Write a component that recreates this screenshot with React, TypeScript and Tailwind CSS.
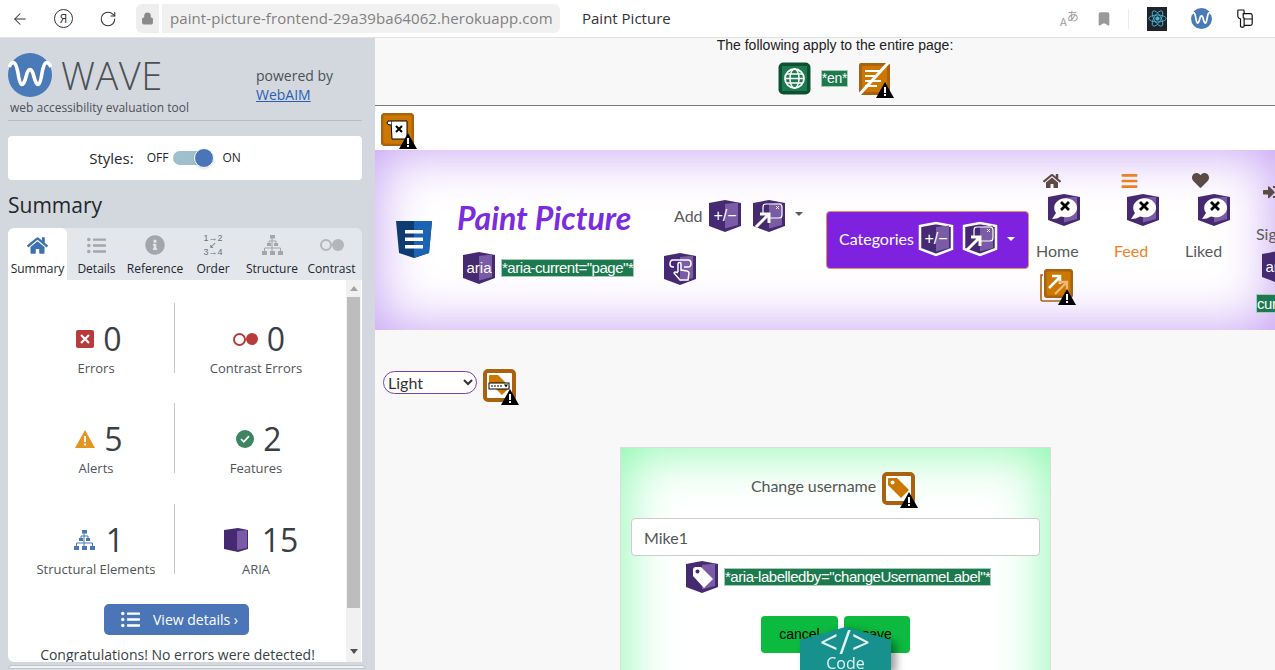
import { ArrowLeft, RotateCw, Lock, Bookmark } from "lucide-react";
import { FaHome, FaListUl, FaInfoCircle, FaHeart, FaBars, FaSignInAlt } from "react-icons/fa";
import type { ReactNode } from "react";

// purple WAVE ARIA badge
function AriaBadge({ children, outlined = false }: { children?: ReactNode; outlined?: boolean }) {
  return (
    <svg viewBox="-3 -3 38 38" className={outlined ? "w-[38px] h-[38px] shrink-0" : "w-[38px] h-[38px] -m-[3px] shrink-0"}>
      <path d="M0 3 L16 0 L32 3 V26 L16 32 L0 26 Z" fill="#452a72" stroke={outlined ? "#fff" : "none"} strokeWidth={outlined ? 2.5 : 0} />
      <path d="M16 4 L29 2.5 V25 L16 28.5 Z" fill="#7a5ba5" />
      {children}
    </svg>
  );
}

function AlertMark() {
  return (
    <svg viewBox="0 0 18 16" className="absolute -right-[3px] -bottom-[3px] w-[18px] h-[16px]">
      <path d="M9 0 L18 16 H0 Z" fill="#000" />
      <rect x="8" y="5" width="2" height="6" fill="#fff" />
      <rect x="8" y="12" width="2" height="2" fill="#fff" />
    </svg>
  );
}

// orange alert icon with the black warning corner
function OrangeIcon({ children, className = "" }: { children: ReactNode; className?: string }) {
  return (
    <span className={`relative inline-block w-[33px] h-[33px] shrink-0 ${className}`}>
      <svg viewBox="0 0 33 33" className="w-[33px] h-[33px]">{children}</svg>
      <AlertMark />
    </span>
  );
}

const TagShape = (
  <>
    <rect x="2" y="2" width="29" height="29" rx="3" fill="#fff" stroke="#a9620f" strokeWidth="4" />
    <path d="M6 7 Q6 6 7 6 H15 L27 18 L19 26 L6 13 Z" fill="#cc7700" />
    <circle cx="10.5" cy="10.5" r="2" fill="#fff" />
  </>
);

const BubbleX = (
  <>
    <path d="M4 25 L8 19 A11.5 9.5 0 1 1 13 22.5 Q9 25 4 25 Z" fill="#fff" />
    <path d="M13 8 L21 16 M21 8 L13 16" stroke="#000" strokeWidth="2.8" />
  </>
);

const PlusMinus = (
  <text x="16" y="21" textAnchor="middle" fontSize="16" fill="#fff" fontFamily="Liberation Sans, sans-serif">+/−</text>
);

const ExpandArrow = (
  <>
    <path d="M10 13 V7 Q10 4 13 4 H26 Q29 4 29 7 V15 Q29 18 26 18 H17" fill="none" stroke="#fff" strokeWidth="1.2" />
    <path d="M23 6 L26 9 M26 6 L23 9" stroke="#fff" strokeWidth="0.9" />
    <path d="M3 27 L15 15 M7 14 H16 V23" fill="none" stroke="#fff" strokeWidth="3" />
  </>
);

const AriaWord = (
  <text x="16" y="21" textAnchor="middle" fontSize="15" fill="#fff" fontFamily="Liberation Sans, sans-serif">aria</text>
);

function AttrLabel({ children }: { children: ReactNode }) {
  return (
    <span className="bg-[#1b7a4e] border border-[#a8c9b8] text-white font-['Liberation_Sans',sans-serif] text-[15px] leading-[16px] tracking-[-0.47px] whitespace-nowrap">
      {children}
    </span>
  );
}

function WaveLogo({ className }: { className: string }) {
  return (
    <svg viewBox="0 0 44 44" className={className}>
      <circle cx="22" cy="22" r="22" fill="#4a7ab8" />
      <path d="M1 14 C5 6 8 9 10 20 C12 34 15 35 18 24 C20 14 24 14 26 24 C29 35 32 34 34 20 C36 9 39 6 43 14" fill="none" stroke="#fff" strokeWidth="3.6" />
    </svg>
  );
}

function StructureIcon({ className, fill }: { className: string; fill: string }) {
  return (
    <svg viewBox="0 0 21 20" className={className} fill={fill}>
      <rect x="8" y="0" width="5" height="3.5" />
      <rect x="5" y="8" width="4" height="3" />
      <rect x="12" y="8" width="4" height="3" />
      <rect x="0" y="16" width="5" height="4" />
      <rect x="8" y="16" width="5" height="4" />
      <rect x="16" y="16" width="5" height="4" />
      <path d="M10 3 V16 M7 6 H14 V8 M7 6 V8 M2.5 16 V13 H18.5 V16" fill="none" stroke={fill} strokeWidth="1" />
    </svg>
  );
}

function Stat({ icon, value, label, gap = "gap-[9px]", shift = "ml-[6px]" }: { icon: ReactNode; value: string; label: string; gap?: string; shift?: string }) {
  return (
    <div className="flex flex-col items-center">
      <div className={`flex items-center h-[44px] ${gap} ${shift}`}>
        {icon}
        <span className="text-[32px] leading-[44px] text-[#3a3f45]">{value}</span>
      </div>
      <span className="-mt-[2px] text-[13px] leading-[18px] text-[#4f5459] whitespace-nowrap">{label}</span>
    </div>
  );
}

function StatRow({ left, right, className }: { left: ReactNode; right: ReactNode; className: string }) {
  return (
    <div className={`flex h-[70px] ${className}`}>
      <div className="w-[157px] border-r border-[#c5c8cc] pt-[14px]">{left}</div>
      <div className="w-[162px] pt-[14px]">{right}</div>
    </div>
  );
}

function Tab({ icon, label, active = false, w }: { icon: ReactNode; label: string; active?: boolean; w: string }) {
  return (
    <div className={`${w} flex flex-col items-center h-[52px] pt-[6px] ${active ? "bg-white rounded-t-md" : ""}`}>
      <div className="h-[22px] flex items-center justify-center">{icon}</div>
      <span className="mt-[5px] text-[12px] leading-[16px] text-[#23272b] whitespace-nowrap">{label}</span>
    </div>
  );
}

function Sidebar() {
  return (
    <aside className="w-[375px] shrink-0 bg-[#d3d8df] font-['Open_Sans',sans-serif] pl-[8px] flex flex-col">
      <div className="flex w-[354px] h-[83px] border-b border-[#b9bdc3]">
        <div className="w-[248px] relative">
          <div className="flex items-center mt-[15px]">
            <WaveLogo className="w-[44px] h-[44px]" />
            <span className="ml-[9px] text-[38px] leading-[44px] font-light text-[#4c5055] tracking-[0.5px]">WAVE</span>
          </div>
          <div className="ml-[2px] mt-[2px] text-[12px] leading-[18px] text-[#4c5055] whitespace-nowrap">web accessibility evaluation tool</div>
        </div>
        <div className="pt-[28px] text-[14px] leading-[19px] text-[#4c5055]">
          <div>powered by</div>
          <a className="text-[#2b5fb3] underline">WebAIM</a>
        </div>
      </div>

      <div className="mt-[15px] w-[354px] h-[44px] bg-white rounded-[4px] flex items-center justify-center pr-[40px]">
        <span className="text-[15px] text-[#23272b] mr-[13px]">Styles:</span>
        <span className="text-[12px] text-[#23272b] mr-[5px]">OFF</span>
        <span className="relative w-[41px] h-[14px] rounded-full bg-[#9dc0cc] mr-[8px]">
          <span className="absolute right-0 -top-[3px] w-[20px] h-[20px] rounded-full bg-[#4a76b8] border border-white shadow-sm" />
        </span>
        <span className="text-[12px] text-[#23272b]">ON</span>
      </div>

      <h2 className="mt-[10px] h-[38px] text-[21px] leading-[30px] text-[#23272b]">Summary</h2>

      <div className="w-[354px] h-[52px] bg-[#e3e6ea] rounded-t-md flex">
        <Tab w="w-[59px]" active label="Summary" icon={<FaHome className="w-[21px] h-[21px] text-[#3f70b0]" />} />
        <Tab w="w-[59px]" label="Details" icon={<FaListUl className="w-[19px] h-[19px] text-[#a3a6aa]" />} />
        <Tab w="w-[58px]" label="Reference" icon={<FaInfoCircle className="w-[20px] h-[20px] text-[#a3a6aa]" />} />
        <Tab w="w-[58px]" label="Order" icon={
          <span className="font-['Liberation_Sans',sans-serif] text-[9px] leading-[7px] text-[#6d7075] text-center whitespace-pre">{"1→2\n↙\n3→4"}</span>
        } />
        <Tab w="w-[60px]" label="Structure" icon={<StructureIcon className="w-[21px] h-[20px]" fill="#a3a6aa" />} />
        <Tab w="w-[59px]" label="Contrast" icon={
          <span className="flex items-center">
            <span className="w-[12px] h-[12px] rounded-full border-2 border-[#b3b6ba]" />
            <span className="w-[12px] h-[12px] rounded-full bg-[#b3b6ba]" />
          </span>
        } />
      </div>

      <div className="relative w-[354px] h-[382px] bg-white rounded-bl-md overflow-hidden pl-[10px]">
        <StatRow
          className="mt-[23px]"
          left={<Stat label="Errors" value="0" icon={
            <span className="w-[18px] h-[18px] rounded-[2px] bg-[#b93a3a] flex items-center justify-center">
              <svg viewBox="0 0 10 10" className="w-[10px] h-[10px]"><path d="M1 1 L9 9 M9 1 L1 9" stroke="#fff" strokeWidth="2.2" /></svg>
            </span>
          } />}
          right={<Stat label="Contrast Errors" value="0" icon={
            <span className="flex items-center">
              <span className="w-[13px] h-[13px] rounded-full border-2 border-[#b93a3a]" />
              <span className="w-[12px] h-[12px] rounded-full bg-[#b93a3a]" />
            </span>
          } />}
        />
        <StatRow
          className="mt-[30px]"
          left={<Stat label="Alerts" value="5" icon={
            <svg viewBox="0 0 20 18" className="w-[20px] h-[18px]">
              <path d="M10 0 L20 18 H0 Z" fill="#e59420" />
              <rect x="9" y="6" width="2" height="6" fill="#fff" />
              <rect x="9" y="13.5" width="2" height="2" fill="#fff" />
            </svg>
          } />}
          right={<Stat label="Features" value="2" icon={
            <span className="w-[18px] h-[18px] rounded-full bg-[#3d8461] flex items-center justify-center">
              <svg viewBox="0 0 12 10" className="w-[10px] h-[8px]"><path d="M1 5 L4.5 8.5 L11 1.5" fill="none" stroke="#fff" strokeWidth="2.2" /></svg>
            </span>
          } />}
        />
        <StatRow
          className="mt-[31px]"
          left={<Stat label="Structural Elements" value="1" gap="gap-[11px]" icon={<StructureIcon className="w-[21px] h-[20px]" fill="#4a76b8" />} />}
          right={<Stat label="ARIA" value="15" gap="gap-[14px]" shift="ml-[10px]" icon={
            <svg viewBox="0 0 24 24" className="w-[24px] h-[24px]">
              <path d="M0 2 L14 0 L24 2 V21 L14 24 L0 21 Z" fill="#452a72" />
              <path d="M13 3 L23 2 V20 L13 22 Z" fill="#7a5ba5" />
            </svg>
          } />}
        />
        <div className="mt-[30px] ml-[86px] w-[145px] h-[31px] rounded-[5px] bg-[#4a76b8] flex items-center text-white text-[14px] pl-[17px]">
          <FaListUl className="w-[19px] h-[19px] mr-[13px]" />
          View details ›
        </div>
        <div className="mt-[10px] -ml-[10px] w-[339px] text-center text-[14px] leading-[20px] text-[#3a3f45] whitespace-nowrap">
          Congratulations! No errors were detected!
        </div>

        {/* scrollbar */}
        <div className="absolute right-[1px] top-0 bottom-0 w-[15px] bg-[#f1f1f1] flex flex-col items-center">
          <div className="mt-[6px] w-0 h-0 border-x-[4px] border-x-transparent border-b-[5px] border-b-[#a3a3a3]" />
          <div className="mt-[6px] w-[13px] h-[311px] bg-[#bdbdbd]" />
          <div className="mt-auto mb-[8px] w-0 h-0 border-x-[4px] border-x-transparent border-t-[5px] border-t-[#505050]" />
        </div>
      </div>
      <div className="mt-[3px] h-[4px] w-[358px] rounded-t-md bg-[#f1f2f4] border border-[#c2c5ca]" />
    </aside>
  );
}

function NavColumn({ icon, label, color = "text-[#5a5a5a]", w, badgeOffset = "ml-[13px]" }: { icon: ReactNode; label: string; color?: string; w: string; badgeOffset?: string }) {
  return (
    <div className={`${w} shrink-0 flex flex-col items-start`}>
      <div className="h-[16px] ml-[7px]">{icon}</div>
      <div className={`mt-[6px] ${badgeOffset}`}><AriaBadge>{BubbleX}</AriaBadge></div>
      <span className={`mt-[15px] text-[16px] leading-[19px] ${color}`}>{label}</span>
    </div>
  );
}

function Navbar() {
  return (
    <nav className="h-[180px] bg-white shadow-[inset_0_0_55px_#c29bf2] flex overflow-hidden font-['Lato',sans-serif] pl-[21px]">
      <svg viewBox="0 0 36 38" className="w-[36px] h-[38px] mt-[71px] shrink-0">
        <path d="M0 0 H36 L33 32 L18 37 L3 32 Z" fill="#0f3b73" />
        <path d="M18 0 H36 L33 32 L18 37 Z" fill="#1a63b5" />
        <rect x="9" y="9" width="18" height="3.5" fill="#fff" />
        <rect x="9" y="16.5" width="18" height="3.5" fill="#fff" />
        <rect x="9" y="24" width="18" height="3.5" fill="#fff" />
      </svg>

      <div className="ml-[25px] w-[207px] shrink-0 pt-[48px]">
        <div className="text-[32px] leading-[40px] italic font-bold text-[#7b2be0] whitespace-nowrap">Paint Picture</div>
        <div className="mt-[14px] ml-[6px] flex items-center gap-[6px]">
          <AriaBadge>{AriaWord}</AriaBadge>
          <AttrLabel>*aria-current="page"*</AttrLabel>
        </div>
      </div>

      <div className="w-[162px] shrink-0 pt-[50px]">
        <div className="flex items-center ml-[10px]">
          <span className="text-[16px] text-[#5a5a5a] mr-[6px]">Add</span>
          <AriaBadge>{PlusMinus}</AriaBadge>
          <span className="ml-[12px]"><AriaBadge>{ExpandArrow}</AriaBadge></span>
          <span className="ml-[10px] w-0 h-0 border-x-[4px] border-x-transparent border-t-[4px] border-t-[#5a5a5a] -mt-[4px]" />
        </div>
        <div className="mt-[21px]">
          <AriaBadge>
            <path d="M10 14 H9 Q6 14 6 11 Q6 7 9 7 H24 Q27 7 27 10.5 Q27 14 24 14 H20" fill="none" stroke="#fff" strokeWidth="1.5" />
            <path d="M14 19 V11 Q14 9.5 15.5 9.5 Q17 9.5 17 11 V17 L23 18 Q25 18.5 25 20 L24 27 H16 L10 20 Q11 18 14 20" fill="none" stroke="#fff" strokeWidth="1.5" />
          </AriaBadge>
        </div>
      </div>

      <div className="mt-[61px] h-[58px] w-[203px] shrink-0 rounded-[4px] bg-[#7e22e0] border border-[#e8915a] flex items-center pl-[12px] pb-[2px] text-white text-[16px]">
        <span className="mr-[3px]">Categories</span>
        <AriaBadge outlined>{PlusMinus}</AriaBadge>
        <span className="ml-[6px]"><AriaBadge outlined>{ExpandArrow}</AriaBadge></span>
        <span className="ml-[8px] w-0 h-0 border-x-[4px] border-x-transparent border-t-[4px] border-t-white" />
      </div>

      <div className="ml-[7px] pt-[22px] flex">
        <div className="w-[78px] shrink-0">
          <NavColumn w="w-[78px]" badgeOffset="ml-[12px]" label="Home" icon={<FaHome className="w-[18px] h-[18px] text-[#5c4a45]" />} />
          <OrangeIcon className="ml-[4px] mt-[9px]">
            <path d="M3 6 H1 V30 Q1 32 3 32 H27" fill="none" stroke="#a9620f" strokeWidth="1.6" />
            <rect x="4" y="0" width="29" height="29" rx="3" fill="#a9620f" />
            <rect x="6.5" y="2.5" width="24" height="24" rx="1" fill="#cc7700" />
            <path d="M9 19 L20 8 M12 7 H20 V15" fill="none" stroke="#fff" strokeWidth="2.6" />
            <path d="M15 25 L27 13 M19 13 H27 V21" fill="none" stroke="#f0b878" strokeWidth="2.4" />
          </OrangeIcon>
        </div>
        <NavColumn w="w-[71px]" label="Feed" color="text-[#f07f22]" icon={<FaBars className="w-[17px] h-[18px] text-[#f07f22]" />} />
        <NavColumn w="w-[71px]" label="Liked" icon={<FaHeart className="w-[17px] h-[17px] text-[#5c4a45]" />} />
        <div className="w-[40px] shrink-0 pt-[12px] overflow-hidden">
          <FaSignInAlt className="ml-[7px] w-[16px] h-[16px] text-[#5c4a45]" />
          <div className="mt-[24px] text-[16px] leading-[19px] text-[#5a5a5a] whitespace-nowrap">Sign in</div>
          <div className="mt-[8px] ml-[6px]"><AriaBadge>{AriaWord}</AriaBadge></div>
          <div className="mt-[8px]"><AttrLabel>current="page"*</AttrLabel></div>
        </div>
      </div>
    </nav>
  );
}

function Main() {
  return (
    <main className="relative flex-1 min-w-0 bg-[#f8f8f8] overflow-hidden">
      <div className="h-[68px] border-b border-[#787d78] pl-[20px] font-['Liberation_Sans',sans-serif] text-[14px] text-[#222] flex flex-col items-center">
        <div className="-mt-[1px] leading-[16px]">The following apply to the entire page:</div>
        <div className="mt-[9px] ml-[-1px] flex items-center">
          <svg viewBox="0 0 33 33" className="w-[33px] h-[33px] bg-white">
            <rect x="0.5" y="0.5" width="32" height="32" rx="5" fill="#0b5132" />
            <rect x="4" y="4" width="25" height="25" fill="#1b7a4e" />
            <circle cx="16.5" cy="16.5" r="9.5" fill="none" stroke="#fff" strokeWidth="1.8" />
            <ellipse cx="16.5" cy="16.5" rx="4.5" ry="9.5" fill="none" stroke="#fff" strokeWidth="1.5" />
            <path d="M7 16.5 H26 M8.5 12 H24.5 M8.5 21 H24.5" stroke="#fff" strokeWidth="1.5" />
          </svg>
          <span className="ml-[10px] mr-[10px] bg-[#1b7a4e] border border-[#a8c9b8] text-white text-[14px] leading-[15px] tracking-[-0.2px]">*en*</span>
          <OrangeIcon>
            <rect x="1" y="1" width="31" height="32" rx="2" fill="#a9620f" />
            <rect x="4" y="4" width="25" height="26" fill="#cc7700" />
            <rect x="7" y="8" width="15" height="2" fill="#fff" />
            <rect x="7" y="13" width="12" height="2" fill="#fff" />
            <rect x="7" y="18" width="16" height="2" fill="#fff" />
            <rect x="7" y="23" width="12" height="2" fill="#fff" />
            <path d="M31 0 L1 33" stroke="#fff" strokeWidth="3" />
          </OrangeIcon>
        </div>
      </div>

      <div className="h-[44px] bg-white pl-[6px] pt-[7px]">
        <OrangeIcon>
          <rect x="1" y="1" width="31" height="31" rx="3" fill="#cc7700" stroke="#a9620f" strokeWidth="2.5" />
          <path d="M10 8 H26 V26 H11 Z" fill="#fff" stroke="#000" strokeWidth="1" />
          <path d="M10 8 Q6 7 6 10 Q6 12 10 12" fill="#fff" stroke="#000" strokeWidth="1" />
          <path d="M15 13 L21 19 M21 13 L15 19" stroke="#000" strokeWidth="2" />
        </OrangeIcon>
      </div>

      <Navbar />

      <div className="mt-[39px] pl-[8px] flex items-start font-['Lato',sans-serif]">
        <select className="mt-[2px] w-[94px] h-[23px] rounded-xl border border-[#7b3fb0] text-[16px] text-[#333] bg-white">
          <option>Light</option>
        </select>
        <OrangeIcon className="ml-[6px]">
          <rect x="2" y="2" width="29" height="29" rx="3" fill="#fff" stroke="#a9620f" strokeWidth="4" />
          <path d="M6 7 Q6 6 7 6 H15 L27 18 L19 26 L6 13 Z" fill="#cc7700" />
          <rect x="6" y="14" width="20" height="6" fill="#fff" stroke="#000" strokeWidth="1" />
          <path d="M8 17 H20" stroke="#000" strokeWidth="1" strokeDasharray="2 1" />
          <path d="M21 15.5 H25 L23 18.5 Z" fill="#000" />
        </OrangeIcon>
      </div>

      <div className="mt-[45px] ml-[245px] w-[431px] h-[300px] bg-white border border-[#dcdcdc] shadow-[inset_0_0_55px_#7ff7a5] px-[10px] pt-[24px] font-['Lato',sans-serif]">
        <div className="flex items-start justify-center -ml-[5px]">
          <span className="mt-[2px] text-[16px] text-[#555] mr-[6px] tracking-[-0.05px]">Change username</span>
          <OrangeIcon>{TagShape}</OrangeIcon>
        </div>
        <div className="mt-[13px] h-[38px] rounded-[4px] border border-[#ccc] bg-white flex items-center pl-[12px] pt-[1px] text-[16px] text-[#555]">Mike1</div>
        <div className="mt-[5px] ml-[55px] flex items-center gap-[6px]">
          <AriaBadge>
            <path d="M7 9 Q7 6 10 6 H15 L27 18 L18 27 L7 15 Z" fill="#fff" />
            <circle cx="11.5" cy="10.5" r="2" fill="#452a72" />
          </AriaBadge>
          <AttrLabel>*aria-labelledby="changeUsernameLabel"*</AttrLabel>
        </div>
        <div className="mt-[23px] ml-[130px] flex gap-[6px] font-['Liberation_Sans',sans-serif] text-[14px] text-black">
          <div className="w-[77px] h-[37px] rounded-[4px] bg-[#0cba3f] flex items-center justify-center">cancel</div>
          <div className="w-[66px] h-[37px] rounded-[4px] bg-[#0cba3f] flex items-center justify-center">save</div>
        </div>
      </div>

      {/* WAVE code tab overlay */}
      <div className="absolute left-[425px] bottom-0 w-[91px] h-[43px] drop-shadow-[5px_3px_4px_rgba(0,0,0,0.4)]">
        <div className="w-full h-full bg-[#17918d] [clip-path:polygon(0_30%,50%_0,100%_30%,100%_100%,0_100%)] flex flex-col items-center font-['Open_Sans',sans-serif] text-[#e4f4f3]">
          <span className="mt-[3px] text-[32px] leading-[24px] tracking-[1px]">&lt;/&gt;</span>
          <span className="text-[16px] leading-[18px]">Code</span>
        </div>
      </div>
    </main>
  );
}

function BrowserBar() {
  return (
    <header className="h-[38px] shrink-0 bg-white border-b border-[#e2e2e2] flex items-center text-[#333] font-['Open_Sans',sans-serif]">
      <ArrowLeft className="ml-[11px] w-[18px] h-[18px] text-[#333]" strokeWidth={1.4} />
      <span className="ml-[25px] w-[19px] h-[19px] rounded-full border-[1.5px] border-[#333] flex items-center justify-center text-[12px] leading-none">Я</span>
      <RotateCw className="ml-[26px] w-[18px] h-[18px]" strokeWidth={1.4} />
      <div className="ml-[19px] h-[29px] w-[23px] rounded-l-md bg-[#eeeeee] flex items-center justify-center">
        <Lock className="w-[13px] h-[13px] text-[#8a8a8a]" fill="#8a8a8a" />
      </div>
      <div className="ml-[3px] h-[29px] w-[398px] rounded-r-md bg-[#f1f1f1] flex items-center pl-[8px] text-[15px] tracking-[0.08px] text-[#808080] whitespace-nowrap">
        paint-picture-frontend-29a39ba64062.herokuapp.com
      </div>
      <span className="ml-[22px] text-[15px] text-[#333]">Paint Picture</span>

      <div className="ml-auto flex items-center">
        <span className="text-[#9a9a9a] text-[11px] leading-none font-['Noto_Sans_CJK_JP',sans-serif] w-[18px] whitespace-nowrap">A<span className="text-[12px] align-super">あ</span></span>
        <Bookmark className="ml-[18px] w-[16px] h-[18px] text-[#9a9a9a]" fill="#9a9a9a" />
        <span className="ml-[16px] h-[20px] w-px bg-[#ececec]" />
        <span className="ml-[18px] w-[20px] h-[24px] bg-[#20232a] flex items-center justify-center">
          <svg viewBox="-11 -11 22 22" className="w-[19px] h-[19px]" fill="none" stroke="#49b9d6" strokeWidth="1">
            <circle r="2" fill="#49b9d6" />
            <ellipse rx="10" ry="4" />
            <ellipse rx="10" ry="4" transform="rotate(60)" />
            <ellipse rx="10" ry="4" transform="rotate(120)" />
          </svg>
        </span>
        <WaveLogo className="ml-[24px] w-[21px] h-[21px]" />
        <svg viewBox="0 0 20 22" className="ml-[24px] mr-[21px] w-[18px] h-[20px]" fill="none" stroke="#111" strokeWidth="1.3">
          <path d="M2 2 Q2 1 3 1 H8 Q9 1 9 2 V5 H8 V9 Q8 10 9 10 V19 Q9 20 8 20 H6 Q5 20 5 19 V11 Q2 10 2 8 Z" />
          <path d="M9 5 H16 Q18 5 18 7 V16 Q18 18 16 18 H9 M9 11 H18" />
        </svg>
      </div>
    </header>
  );
}

export default function App() {
  return (
    <div className="w-[1275px] h-[670px] overflow-hidden flex flex-col">
      <BrowserBar />
      <div className="flex-1 min-h-0 flex">
        <Sidebar />
        <Main />
      </div>
    </div>
  );
}
